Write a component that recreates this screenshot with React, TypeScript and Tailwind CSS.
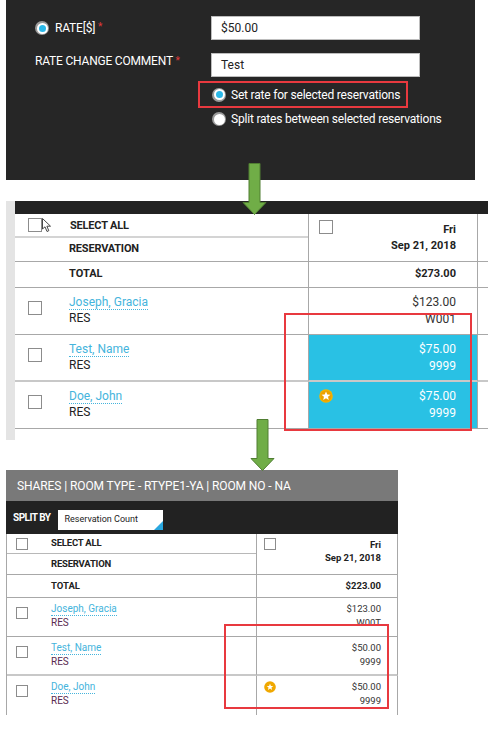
import React from "react";

const font = "font-['Roboto','Liberation_Sans',sans-serif]";

function Radio({ checked }: { checked?: boolean }) {
  return (
    <span className="w-[14px] h-[14px] rounded-full bg-[#9a9a9a] flex items-center justify-center shrink-0">
      <span className="w-[11px] h-[11px] rounded-full bg-white flex items-center justify-center">
        {checked && <span className="w-[7px] h-[7px] rounded-full bg-[#2bb8e8]" />}
      </span>
    </span>
  );
}

function Box({ size = 14 }: { size?: number }) {
  return (
    <span
      className={
        (size === 14 ? "w-[14px] h-[14px]" : "w-[12px] h-[12px]") +
        " block bg-white border border-[#8c8c8c] shrink-0"
      }
    />
  );
}

function Arrow() {
  return (
    <svg width="25" height="52" viewBox="0 0 25 52">
      <path
        d="M7 0.5 H18 V39.5 H24 L12.5 51.5 L1 39.5 H7 Z"
        fill="#70ad47"
        stroke="#507e32"
        strokeWidth="1"
      />
    </svg>
  );
}

function Star({ size, ring }: { size: number; ring?: boolean }) {
  return (
    <svg width={size} height={size} viewBox="0 0 14 14">
      <circle cx="7" cy="7" r="6.8" fill={ring ? "#f0a800" : "#f5b400"} />
      {!ring && <circle cx="7" cy="7" r="5.6" fill="#eca200" />}
      <path
        d="M7 2.4 L8.3 5.5 L11.5 5.7 L9 7.8 L9.8 11 L7 9.2 L4.2 11 L5 7.8 L2.5 5.7 L5.7 5.5 Z"
        fill="#ffffff"
        transform={ring ? "translate(7 7) scale(0.85) translate(-7 -7)" : ""}
      />
    </svg>
  );
}

function Cursor() {
  return (
    <svg width="10" height="15" viewBox="0 0 10 15">
      <path d="M0.5 0.5 V11 L3 8.8 L5 13.5 L6.8 12.7 L4.9 8.2 H8.5 Z" fill="#fff" stroke="#333" strokeWidth="0.9" />
    </svg>
  );
}

function RateForm() {
  return (
    <div className="ml-[6px] w-[469px] h-[180px] bg-[#262626] text-white pt-[16px]">
      <div className="flex items-center h-[24px]">
        <div className="w-[205px] flex items-center gap-[6px] pl-[29px]">
          <Radio checked />
          <span className="text-[12px] tracking-[-0.2px]">
            RATE[$] <span className="text-[#e03a3a] align-top text-[10px]">*</span>
          </span>
        </div>
        <div className="w-[209px] h-[24px] bg-white border border-[#bdbdbd] text-[#222] text-[12px] pl-[9px] flex items-center">
          $50.00
        </div>
      </div>
      <div className="flex h-[24px] mt-[13px]">
        <div className="w-[205px] pl-[29px] text-[12px] tracking-[-0.2px] leading-[16px]">
          RATE CHANGE COMMENT <span className="text-[#e03a3a] align-top text-[10px]">*</span>
        </div>
        <div className="w-[209px] h-[24px] bg-white border border-[#bdbdbd] text-[#222] text-[12px] pl-[9px] flex items-center">
          Test
        </div>
      </div>
      <div className="ml-[192px] mt-[4px] w-[210px] h-[27px] border-2 border-[#e8393f] flex items-center gap-[5px] pl-[12px] text-[12px] tracking-[-0.2px]">
        <Radio checked />
        <span>Set rate for selected reservations</span>
      </div>
      <div className="ml-[206px] mt-[2px] flex items-center gap-[5px] text-[12px] tracking-[-0.2px]">
        <Radio />
        <span>Split rates between selected reservations</span>
      </div>
    </div>
  );
}

function Link({ children, small }: { children: React.ReactNode; small?: boolean }) {
  return (
    <span
      className={
        (small ? "text-[10px] leading-[12px]" : "text-[12px] leading-[14px]") +
        " text-[#45b4dc] border-b border-dotted border-[#45b4dc] self-start"
      }
    >
      {children}
    </span>
  );
}

const rows2 = [
  { name: "Joseph, Gracia", amt: "$123.00", code: "W001", hi: false, star: false },
  { name: "Test, Name", amt: "$75.00", code: "9999", hi: true, star: false },
  { name: "Doe, John", amt: "$75.00", code: "9999", hi: true, star: true },
];

function GridBefore() {
  return (
    <div className="mt-[21px] h-[239px] flex">
      <div className="ml-[6px] w-[9px] bg-[#e4e4e4]" />
      <div className="flex-1 flex flex-col">
        <div className="h-[13px] bg-[#222]" />
        <div className="grid grid-cols-[294px_169px_1fr] text-[#222]">
          <div className="border-r border-[#a8a8a8] flex flex-col">
            <div className="h-[24px] flex items-center border-b-2 border-[#d4d4d4]">
              <span className="ml-[13px] flex items-start">
                <Box />
                <Cursor />
              </span>
              <span className="ml-[18px] mt-[2px] text-[11px] font-bold tracking-[-0.2px]">SELECT ALL</span>
            </div>
            <div className="h-[23px] flex items-center pl-[54px] text-[11px] font-bold tracking-[-0.2px]">RESERVATION</div>
          </div>
          <div className="border-r border-[#a8a8a8] relative pr-[21px] pt-[8px] flex flex-col items-end text-[11px] font-bold leading-[16px]">
            <span className="absolute left-[10px] top-[6px]">
              <Box />
            </span>
            <span>Fri</span>
            <span>Sep 21, 2018</span>
          </div>
          <div />

          <div className="h-[27px] border-y border-r border-[#a8a8a8] flex items-center pl-[54px] text-[11px] font-bold">
            TOTAL
          </div>
          <div className="h-[27px] border-y border-r border-[#a8a8a8] flex items-center justify-end pr-[21px] text-[11px] font-bold">
            $273.00
          </div>
          <div className="border-y border-[#a8a8a8]" />

          {rows2.map((r, i) => (
            <React.Fragment key={r.name}>
              <div
                className={
                  "h-[47px] border-r border-[#a8a8a8] flex items-start pt-[7px] " +
                  (i === 1 ? "border-b-2 border-b-[#c8c8c8]" : "border-b border-b-[#a8a8a8]")
                }
              >
                <span className="ml-[13px] mt-[6px]">
                  <Box />
                </span>
                <div className="ml-[27px] flex flex-col">
                  <Link>{r.name}</Link>
                  <span className="text-[12px] leading-[16px]">RES</span>
                </div>
              </div>
              <div
                className={
                  "h-[47px] border-r border-[#a8a8a8] relative flex flex-col items-end pr-[21px] pt-[6px] text-[12px] leading-[16px] " +
                  (r.hi ? "bg-[#29c1e4] text-white " : "text-[#333] ") +
                  (i === 1 ? "border-b-2 border-b-[#c8c8c8]" : "border-b border-b-[#a8a8a8]")
                }
              >
                {r.star && (
                  <span className="absolute left-[10px] top-[7px]">
                    <Star size={14} />
                  </span>
                )}
                <span>{r.amt}</span>
                <span className="mt-[1px]">{r.code}</span>
              </div>
              <div className={i === 1 ? "border-b-2 border-b-[#c8c8c8]" : "border-b border-b-[#a8a8a8]"} />
            </React.Fragment>
          ))}
        </div>
      </div>
    </div>
  );
}

function GridAfter() {
  return (
    <div className="mt-[30px] ml-[6px] w-[392px] flex flex-col">
      <div className="h-[31px] bg-[#797979] flex items-center pl-[11px] text-white text-[12px] tracking-[-0.1px]">
        SHARES | ROOM TYPE - RTYPE1-YA | ROOM NO - NA
      </div>
      <div className="h-[33px] bg-[#222] flex items-center pl-[7px]">
        <span className="text-white text-[10px] font-bold tracking-[-0.5px]">SPLIT BY</span>
        <div className="ml-[7px] mt-[5px] relative w-[105px] h-[20px] bg-white flex items-center pl-[7px] text-[9px] text-[#222] overflow-hidden">
          Reservation Count
          <span className="absolute right-0 bottom-0 w-0 h-0 border-l-[9px] border-l-transparent border-b-[9px] border-b-[#2aa7df]" />
        </div>
      </div>
      <div className="grid grid-cols-[250px_141px] border-l border-[#a8a8a8] text-[#222]">
        <div className="border-r border-[#a8a8a8] flex flex-col">
          <div className="h-[20px] flex items-center border-b border-[#b8b8b8]">
            <span className="ml-[9px]">
              <Box size={12} />
            </span>
            <span className="ml-[23px] text-[9.5px] font-bold tracking-[-0.2px]">SELECT ALL</span>
          </div>
          <div className="h-[20px] flex items-center pl-[44px] text-[9.5px] font-bold tracking-[-0.2px]">RESERVATION</div>
        </div>
        <div className="border-r border-[#a8a8a8] relative pr-[16px] pt-[4px] flex flex-col items-end text-[9.5px] font-bold leading-[13px]">
          <span className="absolute left-[7px] top-[4px]">
            <Box size={12} />
          </span>
          <span>Fri</span>
          <span>Sep 21, 2018</span>
        </div>

        <div className="h-[24px] border-y border-r border-[#a8a8a8] flex items-center pl-[44px] text-[9.5px] font-bold">
          TOTAL
        </div>
        <div className="h-[24px] border-y border-r border-[#a8a8a8] flex items-center justify-end pr-[16px] text-[9.5px] font-bold">
          $223.00
        </div>

        {rows2.map((r, i) => (
          <React.Fragment key={r.name}>
            <div
              className={
                "h-[39px] border-r border-[#a8a8a8] flex items-start pt-[5px] " +
                (i === 1 ? "border-b-2 border-b-[#c8c8c8]" : i === 0 ? "border-b border-b-[#a8a8a8]" : "")
              }
            >
              <span className="ml-[9px] mt-[4px]">
                <Box size={12} />
              </span>
              <div className="ml-[23px] flex flex-col">
                <Link small>{r.name}</Link>
                <span className="text-[10px] leading-[13px] text-[#5a2a50]">RES</span>
              </div>
            </div>
            <div
              className={
                "h-[39px] border-r border-[#a8a8a8] relative flex flex-col items-end pr-[16px] pt-[4px] text-[9.5px] leading-[13px] text-[#333] " +
                (i === 1 ? "border-b-2 border-b-[#c8c8c8]" : i === 0 ? "border-b border-b-[#a8a8a8]" : "")
              }
            >
              {r.star && (
                <span className="absolute left-[7px] top-[5px]">
                  <Star size={12} ring />
                </span>
              )}
              <span>{i === 0 ? "$123.00" : "$50.00"}</span>
              <span className="mt-[1px]">{i === 0 ? "W00T" : "9999"}</span>
            </div>
          </React.Fragment>
        ))}
      </div>
    </div>
  );
}

export default function App() {
  return (
    <div className={"relative w-[488px] h-[732px] bg-white overflow-hidden " + font}>
      <RateForm />
      <GridBefore />
      <GridAfter />

      {/* arrows + highlight boxes drawn over the panels */}
      <div className="absolute left-[242px] top-[163px]">
        <Arrow />
      </div>
      <div className="absolute left-[250px] top-[419px]">
        <Arrow />
      </div>
      <div className="absolute left-[284px] top-[313px] w-[188px] h-[118px] border-2 border-[#e8393f]" />
      <div className="absolute left-[224px] top-[624px] w-[165px] h-[85px] border-2 border-[#e8393f]" />
    </div>
  );
}
